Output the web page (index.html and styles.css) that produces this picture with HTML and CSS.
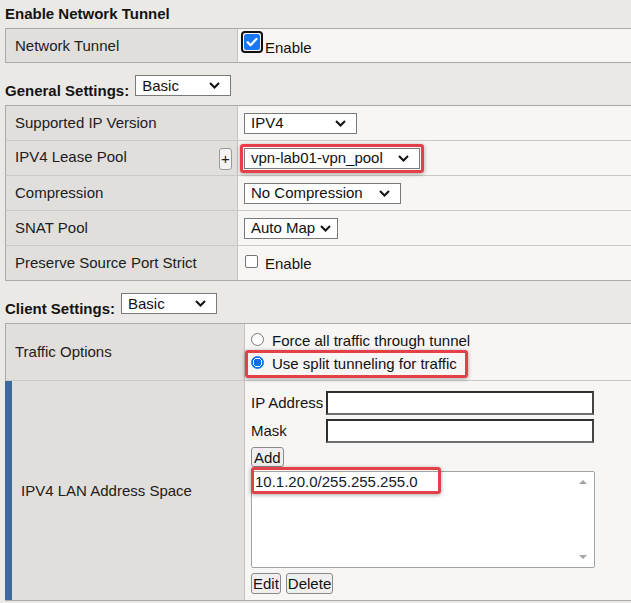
FILE: index.html
```html
<!DOCTYPE html>
<html lang="en">
<head>
<meta charset="utf-8">
<title>Network Access</title>
<link rel="stylesheet" href="styles.css">
</head>
<body>
<main class="page">
  <h2 class="title first">Enable Network Tunnel</h2>
  <section class="tbl t1">
    <div class="lbl">Network Tunnel</div>
    <div class="val">
      <span class="cb on"><svg width="16" height="16" viewBox="0 0 16 16"><rect width="16" height="16" rx="2.5" fill="#1877f2"/><path d="M3.6 8.3l2.9 2.9 5.9-6.3" fill="none" stroke="#fff" stroke-width="2.2" stroke-linecap="round" stroke-linejoin="round"/></svg></span>
      <span class="cb-text">Enable</span>
    </div>
  </section>

  <div class="head">
    <h2 class="title">General Settings:</h2>
    <span class="sel w-basic"><span>Basic</span><svg class="chev" width="11" height="7" viewBox="0 0 11 7"><path d="M1 1l4.5 4.5L10 1" fill="none" stroke="#111" stroke-width="2"/></svg></span>
  </div>
  <section class="tbl t2">
    <div class="lbl">Supported IP Version</div>
    <div class="val"><span class="sel w-ipv"><span>IPV4</span><svg class="chev" width="11" height="7" viewBox="0 0 11 7"><path d="M1 1l4.5 4.5L10 1" fill="none" stroke="#111" stroke-width="2"/></svg></span></div>

    <div class="lbl split"><span class="up">IPV4 Lease Pool</span><span class="plus">+</span></div>
    <div class="val"><span class="sel w-pool mark"><span>vpn-lab01-vpn_pool</span><svg class="chev" width="11" height="7" viewBox="0 0 11 7"><path d="M1 1l4.5 4.5L10 1" fill="none" stroke="#111" stroke-width="2"/></svg></span></div>

    <div class="lbl">Compression</div>
    <div class="val"><span class="sel w-comp"><span>No Compression</span><svg class="chev" width="11" height="7" viewBox="0 0 11 7"><path d="M1 1l4.5 4.5L10 1" fill="none" stroke="#111" stroke-width="2"/></svg></span></div>

    <div class="lbl">SNAT Pool</div>
    <div class="val"><span class="sel w-snat"><span>Auto Map</span><svg class="chev" width="11" height="7" viewBox="0 0 11 7"><path d="M1 1l4.5 4.5L10 1" fill="none" stroke="#111" stroke-width="2"/></svg></span></div>

    <div class="lbl last">Preserve Source Port Strict</div>
    <div class="val last"><span class="cb off"></span><span class="cb-text2">Enable</span></div>
  </section>

  <div class="head">
    <h2 class="title">Client Settings:</h2>
    <span class="sel w-basic"><span>Basic</span><svg class="chev" width="11" height="7" viewBox="0 0 11 7"><path d="M1 1l4.5 4.5L10 1" fill="none" stroke="#111" stroke-width="2"/></svg></span>
  </div>
  <section class="tbl t3">
    <div class="lbl r1">Traffic Options</div>
    <div class="val r1 opts">
      <label class="opt"><span class="radio"></span><span>Force all traffic through tunnel</span></label>
      <label class="opt mark2"><span class="radio on"></span><span>Use split tunneling for traffic</span></label>
    </div>

    <div class="lbl accent last">IPV4 LAN Address Space</div>
    <div class="val last lan">
      <div class="fields">
        <span>IP Address</span><span class="inp"></span>
        <span>Mask</span><span class="inp"></span>
      </div>
      <button class="btn add">Add</button>
      <div class="list">
        <div class="item">10.1.20.0/255.255.255.0</div>
        <span class="mark3"></span>
        <span class="arr up-arr"></span>
        <span class="arr dn-arr"></span>
      </div>
      <div class="btns">
        <button class="btn">Edit</button>
        <button class="btn">Delete</button>
      </div>
    </div>
  </section>
</main>
</body>
</html>
```

FILE: styles.css
```css
* { box-sizing: border-box; }
html, body { margin: 0; padding: 0; }
body {
  background: #ebe9e6;
  font-family: "Liberation Sans", Arial, sans-serif;
  font-size: 15px;
  line-height: 18px;
  color: #141414;
  overflow: hidden;
  width: 631px;
  height: 603px;
}
.page { padding-top: 5px; }

.title {
  margin: 0;
  font-size: 15px;
  line-height: 18px;
  font-weight: bold;
  color: #141414;
  padding-left: 5px;
}
.title.first { margin-bottom: 5px; }

.head {
  display: flex;
  align-items: flex-end;
  height: 42px;
  padding-bottom: 5px;
}
.head .sel { margin-left: 6px; margin-bottom: 4px; }

.tbl {
  display: grid;
  margin-left: 5px;
  border-top: 1px solid #a9a9a9;
  border-bottom: 1px solid #a9a9a9;
}
.t1, .t2 { grid-template-columns: 233px 1fr; }
.t3 { grid-template-columns: 240px 1fr; }

.lbl {
  background: #e0dfdc;
  border-left: 1px solid #a9a9a9;
  border-right: 1px solid #c4c4c4;
  border-bottom: 1px solid #c9c9c9;
  padding-left: 9px;
  display: flex;
  align-items: center;
  color: #202020;
}
.val {
  background: #f7f6f4;
  border-bottom: 1px solid #c9c9c9;
  padding-left: 6px;
  display: flex;
  align-items: center;
}
.lbl.last, .val.last { border-bottom: none; }

.t1 .lbl, .t1 .val { height: 33px; border-bottom: none; }
.t2 .lbl, .t2 .val { height: 35px; }
.t2 .lbl.last, .t2 .val.last { height: 34px; }

.lbl.split { justify-content: space-between; padding-right: 5px; }
.lbl.split .up { margin-top: -3px; }
.plus {
  width: 13px;
  height: 22px;
  border: 1px solid #9a9a9a;
  border-radius: 3px;
  background: #f4f4f4;
  display: flex;
  align-items: center;
  justify-content: center;
  font-size: 15px;
  margin-top: 1px;
}

/* select */
.sel {
  position: relative;
  display: inline-flex;
  align-items: center;
  justify-content: space-between;
  height: 21px;
  border: 1px solid #7a7a7a;
  background: #fff;
  padding: 0 10px 0 6px;
  color: #111;
  white-space: nowrap;
}
.sel .chev { flex: none; }
.w-basic { width: 96px; }
.w-ipv { width: 113px; }
.w-pool { width: 176px; }
.w-comp { width: 157px; }
.w-snat { width: 94px; padding-right: 6px; }

.mark::after {
  content: "";
  position: absolute;
  left: -5px;
  top: -5px;
  right: -5px;
  bottom: -5px;
  border: 3px solid #e5404a;
  border-radius: 3px;
  box-shadow: 0 1px 4px rgba(0,0,0,0.35);
}

/* checkboxes */
.cb.on {
  display: inline-block;
  width: 22px;
  height: 22px;
  border: 2px solid #111;
  border-radius: 4px;
  padding: 1px;
  align-self: flex-start;
  margin: 2px 2px 0 -3px;
}
.cb.on svg { display: block; }
.cb-text { padding-top: 4px; color: #111; }
.cb.off {
  display: inline-block;
  width: 13px;
  height: 13px;
  border: 1px solid #767676;
  border-radius: 2px;
  background: #fff;
  margin: -4px 7px 0 1px;
}
.cb-text2 { padding-top: 2px; }

/* traffic options */
.t3 .r1 { height: 57px; }
.opts {
  flex-direction: column;
  align-items: flex-start;
  justify-content: center;
}
.opt {
  position: relative;
  display: flex;
  align-items: center;
  height: 23px;
  color: #111;
}
.radio {
  width: 13px;
  height: 13px;
  border-radius: 50%;
  border: 1px solid #767676;
  background: #fff;
  margin-right: 8px;
  margin-top: -2px;
}
.radio.on {
  border: 1px solid #0a6fe8;
  background: radial-gradient(circle, #0a6fe8 0 3.6px, #fff 4.1px 4.6px, #0a6fe8 5px);
}
.mark2::after {
  content: "";
  position: absolute;
  left: -6px;
  right: -11px;
  top: -2px;
  bottom: -3px;
  border: 3px solid #e5404a;
  border-radius: 3px;
  box-shadow: 0 1px 4px rgba(0,0,0,0.35);
}

/* LAN address space */
.lbl.accent {
  border-left: 7px solid #3c6a99;
  padding-left: 9px;
}
.t3 .last { height: 219px; }
.lan {
  flex-direction: column;
  align-items: flex-start;
  padding-top: 10px;
}
.fields {
  display: grid;
  grid-template-columns: 75px 268px;
  row-gap: 4px;
  align-items: center;
}
.inp {
  display: block;
  height: 24px;
  background: #fff;
  border: 2px solid #2e2e2e;
  border-bottom-color: #6e6e6e;
  border-right-color: #444;
}
.btn {
  font-family: inherit;
  font-size: 15px;
  line-height: 17px;
  color: #111;
  background: #efefef;
  border: 1px solid #8a8a8a;
  border-radius: 3px;
  padding: 0 1px;
  height: 21px;
  margin: 0;
}
.btn.add { margin-top: 4px; height: 20px; padding: 0 2px; }
.list {
  position: relative;
  margin-top: 4px;
  width: 344px;
  height: 97px;
  background: #fff;
  border: 1px solid #a3a3a3;
  border-radius: 2px;
}
.item {
  padding: 1px 3px 0;
  line-height: 18px;
  color: #10202c;
}
.mark3 {
  position: absolute;
  left: -1px;
  top: -5px;
  width: 190px;
  height: 27px;
  border: 3px solid #e5404a;
  border-radius: 3px;
  box-shadow: 0 1px 4px rgba(0,0,0,0.35);
}
.arr {
  position: absolute;
  right: 7px;
  width: 0;
  height: 0;
  border-left: 4px solid transparent;
  border-right: 4px solid transparent;
}
.up-arr { top: 8px; border-bottom: 4px solid #a3a3a3; }
.dn-arr { bottom: 8px; border-top: 4px solid #a3a3a3; }
.btns {
  display: flex;
  gap: 5px;
  margin-top: 5px;
}
```
